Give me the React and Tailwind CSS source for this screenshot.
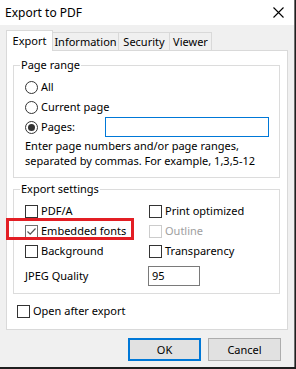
import React from "react";

const font = { fontFamily: '"Noto Sans", "Open Sans", sans-serif' };

function Radio({ checked, label }) {
  return (
    <div className="flex items-center h-[20px]">
      <span className="w-[13px] h-[13px] rounded-full border border-[#333333] bg-white flex items-center justify-center">
        {checked && <span className="w-[7px] h-[7px] rounded-full bg-[#333333]" />}
      </span>
      <span className="ml-[3px]">{label}</span>
    </div>
  );
}

function Check({ checked, label, disabled, gray }) {
  return (
    <div className="flex items-center h-[20px]">
      <span
        className={
          "w-[13px] h-[13px] border bg-white flex items-center justify-center " +
          (disabled ? "border-[#cccccc]" : gray ? "border-[#707070]" : "border-[#333333]")
        }
      >
        {checked && (
          <svg width="11" height="11" viewBox="0 0 11 11">
            <path d="M1.5 5.5 L4.2 8.2 L9.5 2.5" fill="none" stroke="#555555" strokeWidth="1.2" />
          </svg>
        )}
      </span>
      <span className={"ml-[3px] " + (disabled ? "text-[#a0a0a0]" : "")}>{label}</span>
    </div>
  );
}

export default function App() {
  return (
    <div className="w-[296px] h-[369px] bg-[#1f1f1f] overflow-hidden text-[11px] leading-[16px] text-black" style={font}>
      <div className="w-[295px] h-[367px] bg-[#f0f0f0] border-r border-[#6e6e6e] flex flex-col">
        <div className="h-[25px] bg-white flex items-center justify-between pl-[5px] pr-[10px] shrink-0">
          <span className="text-[12px]">Export to PDF</span>
          <svg width="11" height="11" viewBox="0 0 11 11">
            <path d="M0.5 0.5 L10.5 10.5 M10.5 0.5 L0.5 10.5" stroke="#000" strokeWidth="1.1" />
          </svg>
        </div>
        <div className="pl-[6px] pt-[5px]">
          <div className="flex items-end h-[20px] relative z-10">
            <div className="w-[47px] h-[21px] mb-[-1px] bg-white border border-b-0 border-[#d9d9d9] flex items-center justify-center pb-[1px]">
              Export
            </div>
            <div className="w-[66px] h-[18px] bg-[#f0f0f0] border-t border-r border-[#d9d9d9] flex items-center justify-center">
              Information
            </div>
            <div className="w-[51px] h-[18px] bg-[#f0f0f0] border-t border-r border-[#d9d9d9] flex items-center justify-center">
              Security
            </div>
            <div className="w-[42px] h-[18px] bg-[#f0f0f0] border-t border-r border-[#d9d9d9] flex items-center justify-center">
              Viewer
            </div>
          </div>
          <div className="w-[282px] h-[280px] bg-white border border-[#d9d9d9] pl-[6px] pt-[6px]">
            <fieldset className="w-[267px] border border-[#dcdcdc] pb-[9px]">
              <legend className="ml-[6px] px-[1px] leading-[16px]">Page range</legend>
              <div className="pl-[11px] pt-[4px]">
                <Radio label="All" />
                <Radio label="Current page" />
                <div className="flex items-center h-[20px]">
                  <div className="w-[80px]">
                    <Radio checked label="Pages:" />
                  </div>
                  <div className="w-[164px] h-[20px] border border-[#0078d7] bg-white" />
                </div>
                <div className="mt-[1px] leading-[15px]">
                  Enter page numbers and/or page ranges,
                  <br />
                  separated by commas. For example, 1,3,5-12
                </div>
              </div>
            </fieldset>
            <fieldset className="w-[267px] border border-[#dcdcdc] pb-[7px] mt-[3px]">
              <legend className="ml-[6px] px-[1px] leading-[16px]">Export settings</legend>
              <div className="pl-[11px] pt-[4px]">
                <div className="grid grid-cols-[124px_1fr]">
                  <Check label="PDF/A" />
                  <Check label="Print optimized" />
                  <div className="relative">
                    <Check checked gray label="Embedded fonts" />
                    <div className="absolute left-[-19px] top-[-3px] w-[128px] h-[22px] border-[3px] border-[#e31e24]" />
                  </div>
                  <Check disabled label="Outline" />
                  <Check label="Background" />
                  <Check label="Transparency" />
                </div>
                <div className="grid grid-cols-[123px_1fr] items-center mt-[5px]">
                  <span>JPEG Quality</span>
                  <div className="w-[52px] h-[20px] border border-[#7a7a7a] bg-white flex items-center pl-[3px]">95</div>
                </div>
              </div>
            </fieldset>
            <div className="ml-[4px] mt-[7px]">
              <Check label="Open after export" />
            </div>
          </div>
          <div className="flex gap-[7px] pl-[122px] mt-[8px]">
            <div className="w-[73px] h-[23px] bg-[#e1e1e1] border-2 border-[#0078d7] flex items-center justify-center">OK</div>
            <div className="w-[73px] h-[23px] bg-[#e1e1e1] border border-[#adadad] flex items-center justify-center">Cancel</div>
          </div>
        </div>
      </div>
    </div>
  );
}
